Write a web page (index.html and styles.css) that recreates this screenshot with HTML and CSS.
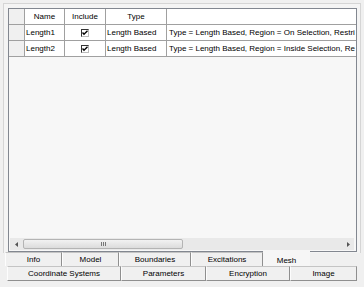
FILE: index.html
```html
<!DOCTYPE html>
<html>
<head>
<meta charset="utf-8">
<link rel="stylesheet" href="styles.css">
</head>
<body>
<div class="page">
  <div class="panel">
    <div class="grid">
      <div class="rows">
        <div class="row head">
          <div class="cell rh"></div>
          <div class="cell c-name center">Name</div>
          <div class="cell c-inc center">Include</div>
          <div class="cell c-type center">Type</div>
          <div class="cell c-desc"></div>
        </div>
        <div class="row">
          <div class="cell rh"></div>
          <div class="cell c-name">Length1</div>
          <div class="cell c-inc center"><span class="chk"><svg width="6" height="6" viewBox="0 0 6 6"><path d="M0.5 2.5 L2 4.2 L5.5 0.8" fill="none" stroke="#000" stroke-width="1.4"/></svg></span></div>
          <div class="cell c-type">Length Based</div>
          <div class="cell c-desc">Type = Length Based, Region = On Selection, Restri</div>
        </div>
        <div class="row">
          <div class="cell rh"></div>
          <div class="cell c-name">Length2</div>
          <div class="cell c-inc center"><span class="chk"><svg width="6" height="6" viewBox="0 0 6 6"><path d="M0.5 2.5 L2 4.2 L5.5 0.8" fill="none" stroke="#000" stroke-width="1.4"/></svg></span></div>
          <div class="cell c-type">Length Based</div>
          <div class="cell c-desc">Type = Length Based, Region = Inside Selection, Re</div>
        </div>
      </div>
      <div class="hscroll">
        <div class="arrow"><svg width="4" height="5" viewBox="0 0 4 5"><path d="M3 0 L0 2.5 L3 5 Z" fill="#555"/></svg></div>
        <div class="track">
          <div class="thumb"><span class="grip"><i></i><i></i><i></i></span></div>
        </div>
        <div class="arrow"><svg width="4" height="5" viewBox="0 0 4 5"><path d="M1 0 L4 2.5 L1 5 Z" fill="#555"/></svg></div>
      </div>
    </div>
  </div>
  <div class="tabs">
    <div class="tabrow r1">
      <div class="tab w-info">Info</div>
      <div class="tab w-model">Model</div>
      <div class="tab w-bound">Boundaries</div>
      <div class="tab w-exc">Excitations</div>
      <div class="tab sel w-mesh">Mesh</div>
    </div>
    <div class="tabrow r2">
      <div class="tab w-coord">Coordinate Systems</div>
      <div class="tab w-param">Parameters</div>
      <div class="tab w-enc">Encryption</div>
      <div class="tab w-img">Image</div>
    </div>
  </div>
</div>
</body>
</html>
```
FILE: styles.css
```css
* { box-sizing: border-box; }
html, body { margin: 0; padding: 0; }
body {
  background: #f0f0f0;
  font-family: "Liberation Sans", Arial, sans-serif;
  font-size: 8px;
  color: #000;
}
.page {
  width: 364px;
  height: 287px;
  overflow: hidden;
  padding: 3px 0 0 3px;
}
.panel {
  width: 358px;
  height: 250px;
  border: 1px solid #d5d5d5;
  border-bottom: none;
  background: #f4f4f4;
  padding: 4px 3px 0 4px;
}
.grid {
  width: 349px;
  height: 244px;
  border: 1px solid #828790;
  background: #f7f7f7;
  display: flex;
  flex-direction: column;
  overflow: hidden;
}
.rows {
  flex: 1;
  overflow: hidden;
}
.row {
  display: flex;
  height: 16px;
  white-space: nowrap;
}
.cell {
  flex: none;
  height: 16px;
  line-height: 15px;
  border-right: 1px solid #a0a0a0;
  border-bottom: 1px solid #a0a0a0;
  background: #fff;
  padding-left: 1px;
  overflow: hidden;
}
.head .cell { background: #fff; }
.cell.rh { width: 16px; background: #f0f0f0; }
.head .cell.rh { background: #f0f0f0; }
.c-name { width: 40px; }
.c-inc { width: 41px; }
.c-type { width: 61px; }
.c-desc { width: 300px; padding-left: 2px; }
.center { text-align: center; padding-left: 0; }
.chk {
  display: inline-flex;
  align-items: center;
  justify-content: center;
  width: 8px;
  height: 8px;
  margin-top: 4px;
  vertical-align: top;
  background: #fff;
  border: 1px solid #333;
  border-right-color: #bbb;
  border-bottom-color: #bbb;
}
.hscroll {
  flex: none;
  height: 12px;
  margin: 0 0 1px 1px;
  width: 344px;
  display: flex;
  align-items: stretch;
  background: #e9e9e9;
}
.arrow {
  flex: none;
  width: 13px;
  display: flex;
  align-items: center;
  justify-content: center;
}
.track { flex: 1; padding: 1px 0; }
.thumb {
  width: 160px;
  height: 100%;
  border: 1px solid #b4b4b4;
  border-radius: 2px;
  background: linear-gradient(#f2f2f2, #dcdcdc);
  display: flex;
  align-items: center;
  justify-content: center;
}
.grip { display: flex; gap: 1px; }
.grip i { display: block; width: 1px; height: 4px; background: #777; }
.tabs { display: flex; flex-direction: column; }
.tabrow { display: flex; height: 14px; }
.r1 { padding-left: 2px; margin-top: -1px; }
.r2 { padding-left: 4px; height: 15px; }
.tab {
  flex: none;
  text-align: center;
  line-height: 14px;
  border-top: 1px solid #c4c4c4;
  border-left: 1px solid #fdfdfd;
  border-right: 1px solid #8f8f8f;
  border-bottom: 1px solid #8f8f8f;
  background: #f0f0f0;
}
.r1 .tab { border-bottom: none; }
.tab.sel {
  border: none;
  background: #f6f6f6;
  line-height: 22px;
  height: 16px;
  margin-top: -2px;
}
.w-info { width: 57px; }
.w-model { width: 57px; }
.w-bound { width: 72px; }
.w-exc { width: 72px; }
.w-mesh { width: 47px; }
.w-coord { width: 114px; }
.w-param { width: 85px; }
.w-enc { width: 84px; }
.w-img { width: 67px; }
```
